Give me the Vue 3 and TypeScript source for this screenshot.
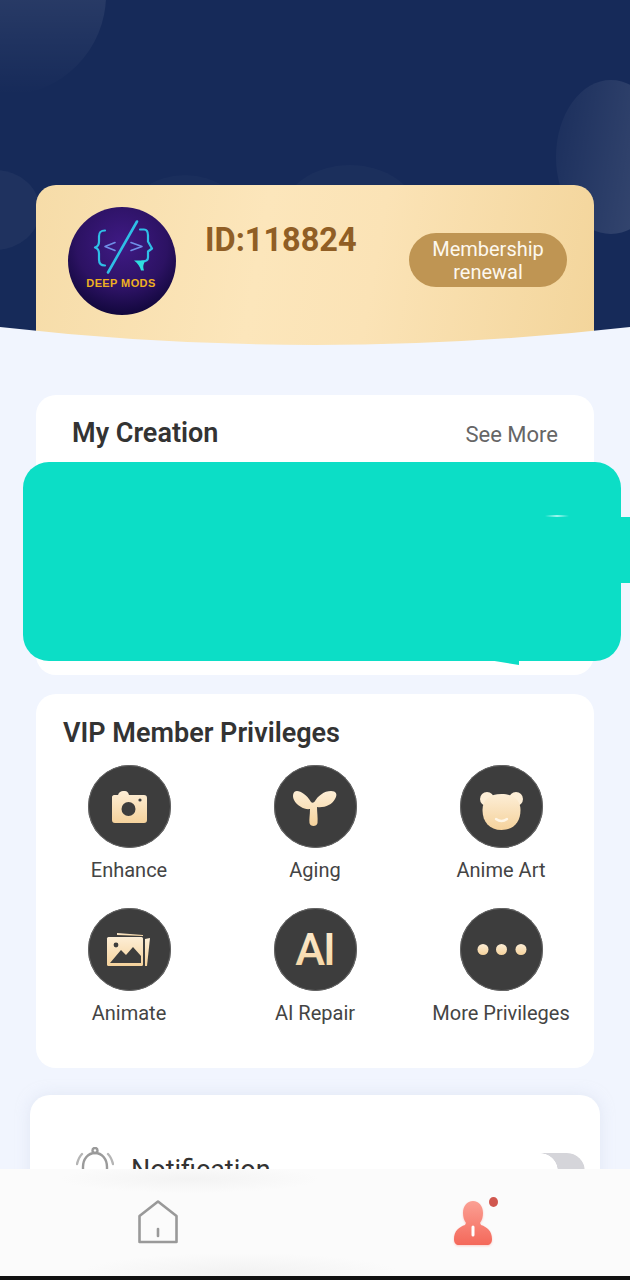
<script setup lang="ts">
interface Privilege {
  label: string
  icon: 'camera' | 'sprout' | 'bear' | 'photos' | 'ai' | 'more'
}

const privileges: Privilege[] = [
  { label: 'Enhance', icon: 'camera' },
  { label: 'Aging', icon: 'sprout' },
  { label: 'Anime Art', icon: 'bear' },
  { label: 'Animate', icon: 'photos' },
  { label: 'AI Repair', icon: 'ai' },
  { label: 'More Privileges', icon: 'more' },
]
</script>

<template>
  <div class="page">
    <header class="hero">
      <span class="bubble bubble-a"></span>
      <span class="bubble bubble-b"></span>
      <span class="bubble bubble-c"></span>
      <span class="bubble bubble-d"></span>
      <span class="bubble bubble-e"></span>
      <div class="member">
        <svg class="avatar" viewBox="0 0 108 108">
          <defs>
            <radialGradient id="avatarBg" cx="0.5" cy="0.35" r="0.7">
              <stop offset="0" stop-color="#3f1a85" />
              <stop offset="0.6" stop-color="#2c1263" />
              <stop offset="1" stop-color="#0c0534" />
            </radialGradient>
          </defs>
          <circle cx="54" cy="54.5" r="54" fill="url(#avatarBg)" />
          <g fill="none" stroke="#2fbfe6" stroke-width="2.2" stroke-linecap="round" stroke-linejoin="round">
            <path d="M37 24c-5 0-6 2-6 6v5c0 3-1 5-4 6 3 1 4 3 4 6v6c0 4 2 6 6 6" />
            <path d="M72 23h4c3 0 4 2 4 6v6l4 7-4 3v6c0 3-2 4-6 4" />
            <path d="M69 15L40 66" stroke-width="2.6" />
            <path d="M47 36l-10 4 10 4M63 36l11 4-11 4" stroke="#6f8fe8" stroke-width="1.6" />
          </g>
          <path d="M66 54h11l-1 3c-1 2-1 4 0 7l-3 0c-1-4-3-7-7-10z" fill="#2fe0e0" />
          <text x="53" y="80" text-anchor="middle" class="avatar-text">DEEP MODS</text>
        </svg>
        <div class="member-id">ID:118824</div>
        <button class="renew" type="button">Membership renewal</button>
      </div>
      <svg class="curve" viewBox="0 0 630 18" width="630" height="18">
        <path d="M0 0Q315 36 630 0V18H0Z" fill="#f1f5fe" />
      </svg>
    </header>

    <main class="content">
      <section class="card creation">
        <div class="creation-head">
          <h2>My Creation</h2>
          <span class="see-more">See More</span>
        </div>
        <div class="redaction">
          <span class="redaction-line"></span>
          <span class="redaction-tab"></span>
          <span class="redaction-tip"></span>
        </div>
      </section>

      <section class="card vip">
        <h2>VIP Member Privileges</h2>
        <div class="grid">
          <div v-for="item in privileges" :key="item.label" class="privilege">
            <div class="circle">
              <svg viewBox="0 0 83 83">
                <defs>
                  <linearGradient :id="'gold-' + item.icon" x1="0" y1="0" x2="0" y2="1">
                    <stop offset="0" stop-color="#fdeed6" />
                    <stop offset="1" stop-color="#f5d29c" />
                  </linearGradient>
                </defs>
                <g v-if="item.icon === 'camera'" :fill="'url(#gold-' + item.icon + ')'">
                  <path d="M26 30h4c1-3 3-4 5-4h2c2 0 3 1 4 4h15c2 0 3 1 3 3v22c0 2-1 3-3 3H27c-2 0-3-1-3-3V32c0-1 1-2 2-2z" />
                  <circle cx="40.5" cy="44" r="7" fill="#3d3d3d" />
                  <circle cx="52" cy="35" r="1.6" fill="#3d3d3d" />
                </g>
                <path
                  v-else-if="item.icon === 'sprout'"
                  d="M37 37C33 30 27 26 23 26C19 26 18 31 20 35C23 41 31 45 36 44C36 50 35 54 35.5 58C36 62 43 62 43.5 58C44 53 43 47 43 42C50 43 58 40 61 34C64 29 62 26 57 26C50 26 44 31 41 36C40 38 38 38 37 37Z"
                  :fill="'url(#gold-' + item.icon + ')'"
                />
                <g v-else-if="item.icon === 'bear'">
                  <circle cx="27" cy="34" r="7" fill="#fdeed6" />
                  <circle cx="56" cy="34" r="7" fill="#fdeed6" />
                  <path d="M41.5 29c12 0 19 6 19 16 0 12-7 20-19 20s-19-8-19-20c0-10 7-16 19-16z" :fill="'url(#gold-' + item.icon + ')'" />
                  <path d="M36 54c4 3 7 3 11 0" fill="none" stroke="#fff6e6" stroke-width="2.4" stroke-linecap="round" />
                </g>
                <g v-else-if="item.icon === 'photos'" :fill="'url(#gold-' + item.icon + ')'">
                  <path d="M29 25l26 2v1l-26-1z" />
                  <path d="M57 31l5-1-3 28h-2z" />
                  <rect x="19" y="29" width="36" height="29" rx="1.5" />
                  <circle cx="28" cy="37" r="2.4" fill="#3d3d3d" />
                  <path d="M22 55l11-13 5 5 7-8 8 9v7z" fill="#3d3d3d" />
                </g>
                <text v-else-if="item.icon === 'ai'" x="40.5" y="57" text-anchor="middle" class="ai-text" :fill="'url(#gold-' + item.icon + ')'">AI</text>
                <g v-else :fill="'url(#gold-' + item.icon + ')'">
                  <circle cx="23" cy="41.5" r="5.5" />
                  <circle cx="41.5" cy="41.5" r="5.5" />
                  <circle cx="61" cy="41.5" r="5.5" />
                </g>
              </svg>
            </div>
            <span class="label">{{ item.label }}</span>
          </div>
        </div>
      </section>

      <section class="card settings">
        <div class="setting-row">
          <svg class="bell" viewBox="0 0 38 40" fill="none" stroke="#9a9a9a" stroke-width="2.4" stroke-linecap="round">
            <circle cx="19" cy="3.5" r="2.5" />
            <path d="M7 32V20c0-8 5-14 12-14s12 6 12 14v12" />
            <path d="M6 7C3 10 2 13 1 17M32 7c3 3 4 6 5 10" stroke="#b5b5b5" />
          </svg>
          <span class="setting-name">Notification</span>
          <span class="toggle"></span>
        </div>
      </section>
    </main>

    <nav class="tabbar">
      <div class="tab">
        <svg width="40" height="44" viewBox="0 0 40 44" fill="none" stroke="#999" stroke-width="2.6" stroke-linejoin="round" stroke-linecap="round">
          <path d="M20 1.500L38.500 16v26h-37V16z" />
          <path d="M20 29v7" />
        </svg>
      </div>
      <div class="tab">
        <svg class="person" width="38" height="46" viewBox="0 0 38 46">
          <defs>
            <linearGradient id="personFill" x1="0" y1="0" x2="0" y2="1">
              <stop offset="0" stop-color="#fba094" />
              <stop offset="1" stop-color="#f4685a" />
            </linearGradient>
          </defs>
          <path d="M19 1c6 0 10 5 10 12 0 4-1 7-3 10l1 2c6 2 11 6 11 14 0 4-2 6-5 6H5c-3 0-5-2-5-6 0-8 5-12 11-14l1-2c-2-3-3-6-3-10C9 6 13 1 19 1z" fill="url(#personFill)" />
          <path d="M19 27v8" stroke="#fff" stroke-width="3" stroke-linecap="round" />
        </svg>
        <span class="dot"></span>
      </div>
    </nav>
  </div>
</template>

<style scoped>
.page {
  position: relative;
  width: 630px;
  height: 1280px;
  overflow: hidden;
  background: #f1f5fe;
  font-family: Roboto, "Liberation Sans", sans-serif;
  color: #333;
}

.hero {
  position: relative;
  height: 345px;
  padding: 185px 36px 0;
  box-sizing: border-box;
  overflow: hidden;
  background: #162a59;
}

.curve {
  position: absolute;
  left: 0;
  bottom: 0;
  display: block;
}

.bubble {
  position: absolute;
  border-radius: 50%;
}

.bubble-a {
  left: -94px;
  top: -105px;
  width: 200px;
  height: 200px;
  background: linear-gradient(180deg, rgba(255, 255, 255, 0.16), rgba(255, 255, 255, 0));
}

.bubble-b {
  left: 556px;
  top: 80px;
  width: 110px;
  height: 154px;
  background: linear-gradient(100deg, rgba(255, 255, 255, 0.02), rgba(255, 255, 255, 0.16));
}

.bubble-c {
  left: -50px;
  top: 170px;
  width: 90px;
  height: 80px;
  background: rgba(255, 255, 255, 0.04);
}

.bubble-d {
  left: 285px;
  top: 165px;
  width: 130px;
  height: 90px;
  background: rgba(255, 255, 255, 0.025);
}

.bubble-e {
  left: 130px;
  top: 175px;
  width: 110px;
  height: 80px;
  background: rgba(255, 255, 255, 0.02);
}

.member {
  position: relative;
  display: flex;
  height: 170px;
  padding: 21px 27px 0 32px;
  box-sizing: border-box;
  border-radius: 20px 20px 0 0;
  background: linear-gradient(100deg, #f6dca8 0%, #fce6bb 40%, #fbe3b6 60%, #f3d59b 100%);
}

.avatar {
  flex: none;
  width: 108px;
  height: 109px;
}

.avatar-text {
  font-family: "Liberation Sans", sans-serif;
  font-size: 11px;
  font-weight: 700;
  letter-spacing: 0.4px;
  fill: #eeb021;
}

.member-id {
  margin: 15px 0 0 29px;
  font-size: 32.5px;
  line-height: 38px;
  font-weight: 700;
  color: #905e25;
}

.renew {
  flex: none;
  width: 158px;
  height: 54px;
  margin: 27px 0 0 auto;
  padding: 1px 20px 0;
  border: none;
  border-radius: 27px;
  background: #bf9553;
  color: #fdf8ee;
  font-family: inherit;
  font-size: 20px;
  line-height: 23px;
  text-align: center;
}

.content {
  display: flex;
  flex-direction: column;
  align-items: center;
  padding-top: 50px;
}

.card {
  width: 558px;
  box-sizing: border-box;
  border-radius: 20px;
  background: #fff;
}

h2 {
  margin: 0;
  font-size: 27px;
  line-height: 32px;
  font-weight: 600;
  color: #333;
}

.creation {
  position: relative;
  height: 280px;
}

.creation-head {
  display: flex;
  justify-content: space-between;
  align-items: center;
  padding: 22px 36px 0 36px;
}

.see-more {
  margin-top: 2px;
  font-size: 22px;
  color: #666;
}

/* the block painted over this part of the screenshot */
.redaction {
  position: absolute;
  left: -13px;
  top: 67px;
  width: 598px;
  height: 199px;
  border-radius: 26px;
  background: #0cdec6;
}

.redaction-line {
  position: absolute;
  left: 522px;
  top: 53px;
  width: 24px;
  height: 2px;
  background: linear-gradient(90deg, #0cdec6, #9ef7ee, #0cdec6);
}

.redaction-tab {
  position: absolute;
  left: 596px;
  top: 55px;
  width: 12px;
  height: 66px;
  background: #0cdec6;
}

.redaction-tip {
  position: absolute;
  left: 470px;
  top: 197px;
  width: 26px;
  height: 6px;
  background: #0cdec6;
  clip-path: polygon(0 30%, 100% 30%, 100% 100%);
}

.vip {
  height: 374px;
  margin-top: 19px;
  padding-top: 23px;
}

.vip h2 {
  padding-left: 27px;
}

.grid {
  display: grid;
  grid-template-columns: repeat(3, 186px);
  grid-auto-rows: 143px;
  margin-top: 16px;
}

.privilege {
  display: flex;
  flex-direction: column;
  align-items: center;
}

.circle {
  width: 83px;
  height: 83px;
  border-radius: 50%;
  background: #3d3d3d;
  box-shadow: inset 0 0 0 1px #666;
}

.circle svg {
  display: block;
  width: 83px;
  height: 83px;
}

.ai-text {
  font-family: Roboto, sans-serif;
  font-size: 45px;
  font-weight: 500;
  letter-spacing: -2px;
}

.label {
  margin-top: 10px;
  font-size: 20px;
  line-height: 24px;
  color: #444;
  white-space: nowrap;
}

.settings {
  flex: none;
  width: 570px;
  height: 240px;
  margin-top: 27px;
  padding: 52px 15px 0 46px;
  box-shadow: 0 0 14px rgba(210, 218, 235, 0.5);
}

.setting-row {
  display: flex;
  align-items: flex-start;
}

.bell {
  flex: none;
  width: 38px;
  height: 40px;
}

.setting-name {
  margin: 7px 0 0 17px;
  font-size: 27px;
  line-height: 32px;
  color: #333;
}

/* the knob is white on the white card, so only the grey part to its right shows */
.toggle {
  width: 63px;
  height: 36px;
  margin: 6px 0 0 auto;
  border-radius: 0 18px 18px 0;
  background: radial-gradient(circle 18px at 18px 18px, #fff 17.5px, #d5d5da 18px);
  clip-path: inset(0 0 0 18px round 0 18px 18px 0);
}

.tabbar {
  position: absolute;
  left: 0;
  right: 0;
  bottom: 0;
  display: grid;
  grid-template-columns: 1fr 1fr;
  height: 111px;
  box-sizing: border-box;
  border-bottom: 4px solid #111;
  background:
    radial-gradient(ellipse 130px 14px at 190px 10px, rgba(225, 225, 225, 0.3), transparent),
    radial-gradient(ellipse 160px 20px at 240px 104px, rgba(225, 225, 225, 0.35), transparent),
    #fbfbfb;
}

.tab {
  position: relative;
  display: flex;
  justify-content: center;
  padding-top: 31px;
}

.person {
  filter: drop-shadow(0 1px 1px rgba(244, 104, 90, 0.3));
}

.dot {
  position: absolute;
  left: 174px;
  top: 28px;
  width: 9px;
  height: 10px;
  border-radius: 50%;
  background: #d0574f;
}
</style>
